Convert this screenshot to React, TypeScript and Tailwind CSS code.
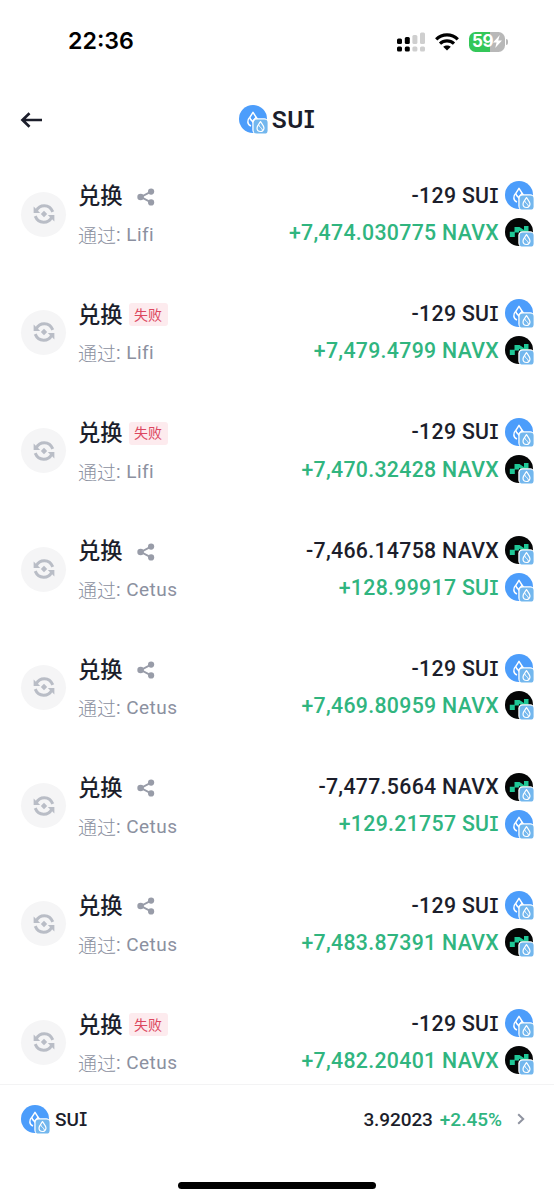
import clsx from "clsx";

type Token = "SUI" | "NAVX";

type Swap = {
  via: string;
  failed?: boolean;
  out: [string, Token];
  in: [string, Token];
};

const SWAPS: Swap[] = [
  { via: "Lifi", out: ["-129", "SUI"], in: ["+7,474.030775", "NAVX"] },
  { via: "Lifi", failed: true, out: ["-129", "SUI"], in: ["+7,479.4799", "NAVX"] },
  { via: "Lifi", failed: true, out: ["-129", "SUI"], in: ["+7,470.32428", "NAVX"] },
  { via: "Cetus", out: ["-7,466.14758", "NAVX"], in: ["+128.99917", "SUI"] },
  { via: "Cetus", out: ["-129", "SUI"], in: ["+7,469.80959", "NAVX"] },
  { via: "Cetus", out: ["-7,477.5664", "NAVX"], in: ["+129.21757", "SUI"] },
  { via: "Cetus", out: ["-129", "SUI"], in: ["+7,483.87391", "NAVX"] },
  { via: "Cetus", failed: true, out: ["-129", "SUI"], in: ["+7,482.20401", "NAVX"] },
];

/** Token logo with the Sui chain badge in its bottom right corner. */
function TokenIcon({ token }: { token: Token }) {
  return (
    <svg viewBox="0 0 29 29" className="h-[29px] w-[29px] flex-none">
      <circle cx="14" cy="14" r="14" fill={token === "SUI" ? "#4c9dfb" : "#050606"} />
      {token === "SUI" ? (
        <g fill="none" stroke="#fff" strokeWidth="1.5" strokeLinejoin="round">
          <path d="M10.8 12.3L14 7.3L17.2 12.3C18.6 14.2 19.4 15.6 19.5 18" />
          <path d="M10.8 12.3C7.8 15.2 8.2 19.6 12 21" />
          <path d="M10.8 12.3C11.3 15.6 14.2 15.8 15 18.6M17.2 12.3L14.2 15.8" />
        </g>
      ) : (
        <path fill="#1fc796" d="M9.5 9H14.5L19 12V8H23.5V13.7H15.8L14 12.8V14.5H9.8V19H4.8V13.8H9.5Z" />
      )}
      <rect x="13.3" y="13.3" width="16" height="16" rx="4.2" fill="#fff" />
      <rect x="14.6" y="14.6" width="14" height="14" rx="3.2" fill="#73b7ee" />
      <g fill="none" stroke="#fff" strokeWidth="1.2" strokeLinejoin="round">
        <path d="M21.5 16.6C23.2 19.2 25 20.8 25 23A3.5 3.5 0 0 1 18 23C18 20.8 19.8 19.2 21.5 16.6Z" />
        <path d="M19.8 20C20 22.6 23.4 22.2 23.5 25.6" strokeWidth="1" />
      </g>
    </svg>
  );
}

/** Ticker text; the capital I is drawn in its serifed form. */
function Ticker({ token }: { token: Token }) {
  if (token === "NAVX") return <>NAVX</>;
  return (
    <>
      SU
      <span className="font-['Inter'] text-[0.97em] [font-feature-settings:'cv08']">I</span>
    </>
  );
}

function SwapIcon() {
  return (
    <span className="flex h-[45px] w-[45px] flex-none items-center justify-center rounded-full bg-[#f5f5f6]">
      <svg viewBox="0 0 24 24" className="h-6 w-6" fill="#b9bdc6">
        <g fill="none" stroke="#b9bdc6" strokeWidth="3">
          <path d="M4.4 8.6C7.5 2.2 17.3 1.4 20.8 9.8" />
          <path d="M19.6 15.4C16.5 21.8 6.7 22.6 3.2 14.2" />
        </g>
        <path d="M1.6 4.6V10.9H8.2Z" />
        <path d="M22.4 19.4V13.1H15.8Z" />
        <path d="M12 8.8L15.2 12L12 15.2L8.8 12Z" />
      </svg>
    </span>
  );
}

function ShareIcon() {
  return (
    <svg viewBox="0 0 18 18" className="ml-[14px] h-[18px] w-[18px]" fill="#989ca8">
      <path d="M14 3.6L4 9L14 14.4" fill="none" stroke="#989ca8" strokeWidth="1.9" />
      <circle cx="3.6" cy="9" r="3.3" />
      <circle cx="14.1" cy="3.6" r="3.1" />
      <circle cx="14.1" cy="14.4" r="3.1" />
    </svg>
  );
}

function Amount({ value, token, positive }: { value: string; token: Token; positive?: boolean }) {
  return (
    <div className="flex h-[37px] items-center justify-end">
      <span
        className={clsx(
          "whitespace-pre text-[21.3px] font-medium leading-none tracking-[0.3px]",
          positive ? "text-[#30b57f]" : "text-[#1c1e2b]",
        )}
      >
        {value} <Ticker token={token} />
      </span>
      <span className="ml-[6px]">
        <TokenIcon token={token} />
      </span>
    </div>
  );
}

function SwapRow({ swap }: { swap: Swap }) {
  return (
    <li className="flex h-[118.3px] flex-none items-center pl-[21px] pr-5">
      <SwapIcon />
      <div className="ml-3 flex flex-col pt-[3px]">
        <div className="flex h-[38px] items-center">
          <span className="text-[22.3px] font-medium leading-none text-[#1c1e2b]">兑换</span>
          {swap.failed ? (
            <span className="ml-[6px] flex h-[23px] w-[39px] items-center justify-center rounded-[3px] bg-[#fdebee] text-[14px] leading-none text-[#dc4760]">
              失败
            </span>
          ) : (
            <ShareIcon />
          )}
        </div>
        <span className="flex h-[38px] items-center whitespace-pre text-[19px] leading-none text-[#8b90a0]">
          <span className="font-['Noto_Sans_CJK_SC'] font-light">通过</span>
          <span className="tracking-[0.45px]">: {swap.via}</span>
        </span>
      </div>
      <div className="ml-auto">
        <Amount value={swap.out[0]} token={swap.out[1]} />
        <Amount value={swap.in[0]} token={swap.in[1]} positive />
      </div>
    </li>
  );
}

function StatusBar() {
  return (
    <div className="flex h-[83px] flex-none items-center pl-[68px] pr-[46px] text-black">
      <span className="font-['Inter'] text-[23.2px] font-semibold leading-none">22:36</span>
      <svg viewBox="0 0 28 20" className="ml-auto h-5 w-7">
        <rect x="0" y="6.5" width="5" height="5.5" rx="1.5" />
        <rect x="7.8" y="5" width="5" height="7" rx="1.5" />
        <rect x="15.4" y="3" width="5" height="9" rx="1.5" fill="#cfcfcf" />
        <rect x="23" y="0.5" width="5" height="11.5" rx="1.5" fill="#cfcfcf" />
        <rect x="0" y="14.5" width="5" height="5" rx="1.5" />
        <rect x="7.8" y="14.5" width="5" height="5" rx="1.5" />
        <rect x="15.4" y="14.5" width="5" height="5" rx="1.5" fill="#cfcfcf" />
        <rect x="23" y="14.5" width="5" height="5" rx="1.5" fill="#cfcfcf" />
      </svg>
      <svg viewBox="0 0 24 18" className="ml-[10px] h-[18px] w-6">
        <g fill="none" stroke="#000" strokeWidth="3.2">
          <path d="M1.2 6.3C7.2 .4 16.8 .4 22.8 6.3" />
          <path d="M5 10.7C9 7 15 7 19 10.7" />
        </g>
        <path d="M8.2 13.8C10.4 11.9 13.6 11.9 15.8 13.8L12 17.6Z" />
      </svg>
      <div className="ml-[10px] flex h-[20px] w-9 items-center justify-center rounded-[6.5px] bg-[linear-gradient(90deg,#34c759_59%,#b8b8b8_59%)] text-white">
        <span className="font-['Inter'] text-[17px] font-bold leading-none tracking-[-0.4px]">59</span>
        <svg viewBox="0 0 9 13" className="h-[13px] w-[9px]" fill="currentColor">
          <path d="M6.8 0L0 7.4H3.6L2.2 13L9 5.4H5.2Z" />
        </svg>
      </div>
      <span className="ml-px h-[6px] w-[2px] rounded-r-full bg-[#b8b8b8]" />
    </div>
  );
}

export default function App() {
  return (
    <div className="flex h-[1200px] w-[554px] flex-col overflow-hidden bg-white font-['Roboto','Noto_Sans_CJK_SC',sans-serif]">
      <StatusBar />
      <header className="grid h-[72px] flex-none grid-cols-[1fr_auto_1fr] items-center px-5 pt-px">
        <svg
          viewBox="0 0 22 18"
          className="h-[18px] w-[22px]"
          fill="none"
          stroke="#1c1e2b"
          strokeWidth="2.7"
        >
          <path d="M9.5 2.2L2.5 9L9.5 15.8M2.5 9H22" />
        </svg>
        <h1 className="flex items-center text-[24.5px] font-semibold leading-none text-[#1c1e2b]">
          <TokenIcon token="SUI" />
          <span className="ml-[4px] pt-[2px] tracking-[0.4px]">
            <Ticker token="SUI" />
          </span>
        </h1>
      </header>
      <ul className="flex min-h-0 flex-1 flex-col overflow-hidden">
        {SWAPS.map((swap, i) => (
          <SwapRow key={i} swap={swap} />
        ))}
      </ul>
      <footer className="flex h-[116px] flex-none flex-col border-t border-[#f3f3f4] bg-white">
        <div className="flex h-[68px] items-center pl-[21px] pr-[29px] text-[19px] leading-none text-[#1c1e2b]">
          <TokenIcon token="SUI" />
          <span className="ml-[5px] font-medium">
            <Ticker token="SUI" />
          </span>
          <span className="ml-auto pt-px font-medium tracking-[-0.1px]">3.92023</span>
          <span className="ml-[7px] pt-px font-medium text-[#30b57f]">+2.45%</span>
          <svg
            viewBox="0 0 8 12"
            className="ml-[15px] h-3 w-2"
            fill="none"
            stroke="#8f93a0"
            strokeWidth="2"
          >
            <path d="M1.2 1.2L6.2 6L1.2 10.8" />
          </svg>
        </div>
        <div className="mx-auto mt-[29px] h-[7px] w-[198px] rounded-full bg-black" />
      </footer>
    </div>
  );
}
